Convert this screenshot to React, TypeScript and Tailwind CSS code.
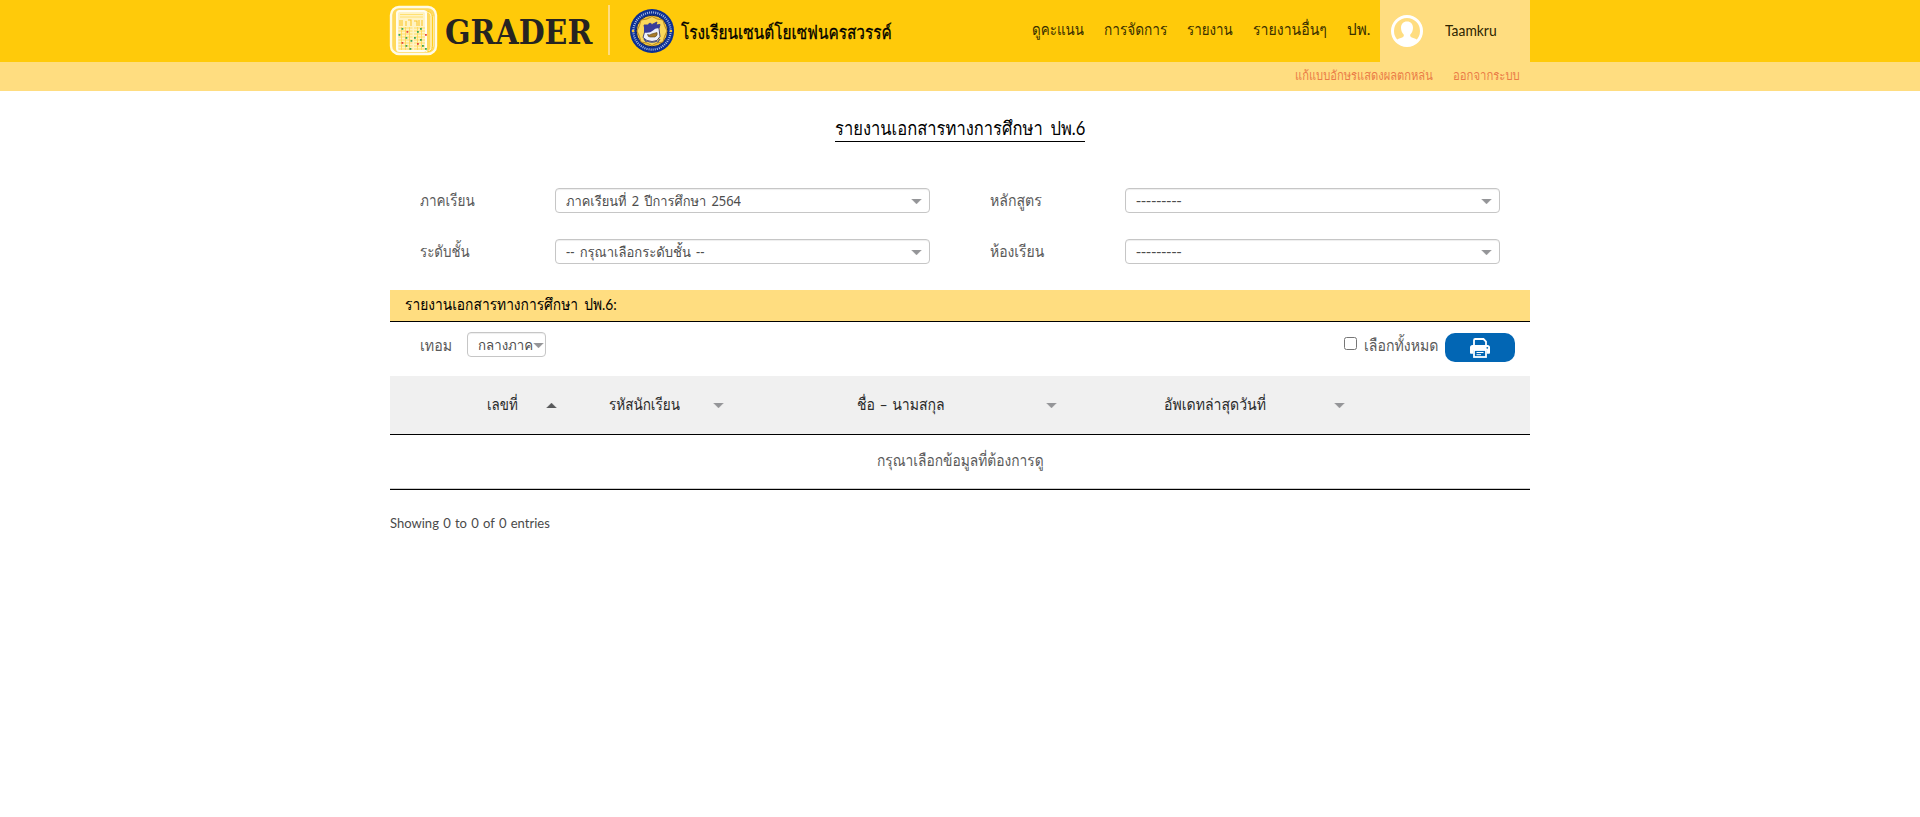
import { useLayoutEffect, useRef } from 'react';
import type { ReactNode } from 'react';

/* Condenses a line of text so that it fills the width its class gives it. */
function Fit({ className, children }: { className: string; children: ReactNode }) {
  const outer = useRef<HTMLSpanElement>(null);
  const inner = useRef<HTMLSpanElement>(null);
  useLayoutEffect(() => {
    const o = outer.current!;
    const i = inner.current!;
    i.style.transform = `scaleX(${o.clientWidth / i.offsetWidth})`;
  }, []);
  return (
    <span ref={outer} className={`block shrink-0 whitespace-nowrap ${className}`}>
      <span ref={inner} className="inline-block origin-left">{children}</span>
    </span>
  );
}

function Logo() {
  const dots = [
    [20, 31, '#3aa655'], [25, 34, '#e8453c'], [17, 37, '#3aa655'], [24, 40, '#3aa655'], [29, 43, '#3aa655'], [20, 45, '#e8453c'], [24, 48, '#3aa655'], [28, 51, '#3aa655'],
    [41, 31, '#3aa655'], [38, 34, '#3aa655'], [46, 37, '#e8453c'], [35, 40, '#3aa655'], [41, 42, '#3aa655'], [38, 46, '#e8453c'], [43, 48, '#3aa655'], [46, 51, '#3aa655'],
  ] as const;
  return (
    <svg viewBox="0 0 56 60" className="h-[60px] w-[56px] shrink-0">
      <rect x="5" y="7" width="45" height="47" rx="8" fill="#ffd95e" stroke="#fffbe6" strokeWidth="2.4" />
      <path d="M40 11.500q5 1 5 5v30q0 5-5 5M43 12q4 1 4 5v29q0 4-4 5" fill="none" stroke="#fffbe6" strokeWidth="1" />
      <path d="M41.500 11.500q5 1 5 5v30q0 5-5 5" fill="none" stroke="#ffce1e" strokeWidth="1" />
      <rect x="11" y="11" width="29" height="40" rx="2.500" fill="#fff3c4" stroke="#fffdf2" strokeWidth="2" />
      <path d="M14 14.500h23M14 17h23" stroke="#ffdb5c" strokeWidth=".8" />
      <path d="M14 20v6M16 20v6M20 21v5M22 20h3v6M28 21h3v5M33 20v6M36 20v6" stroke="#fcc62c" strokeWidth="1.100" fill="none" />
      <g transform="translate(-2.500 -3)">
        <path d="M15 31h14M15 34h14M15 37h14M15 40h14M15 43h14M15 46h14M15 49h14M15 52h14M18 30v23M22 30v23M26 30v23M30.500 31h11M30.500 34h11M30.500 37h11M30.500 40h11M30.500 43h11M30.500 46h11M30.500 49h11M30.500 52h11M34 30v23M38 30v23" stroke="#ffd750" strokeWidth=".8" />
        {dots.map(([x, y, c]) => <rect key={`${x}-${y}`} x={x > 32 ? x - 4.5 : x - 2} y={y} width="1.800" height="1.800" fill={c} />)}
      </g>
    </svg>
  );
}

function Emblem() {
  return (
    <svg viewBox="0 0 44 44" className="h-[44px] w-[44px]">
      <circle cx="22" cy="22" r="22" fill="#0b2f94" />
      <circle cx="22" cy="22" r="18.600" fill="none" stroke="#a9bde4" strokeWidth="2.200" strokeDasharray="1 1.100" pathLength="116" />
      <circle cx="22" cy="22" r="15.800" fill="#f6c534" stroke="#0c2368" strokeWidth="1" />
      <path d="M22 7.500l5 2.500 6 1 1.500 5.500 2.500 5.500-2.500 5.500-1.500 5.500-6 1-5 2.500-5-2.500-6-1-1.500-5.500L7 22l2.500-5.500L11 11l6-1z" fill="#fbd85a" stroke="#a8791d" strokeWidth=".8" />
      <circle cx="3" cy="22" r="1.300" fill="#f6c534" />
      <circle cx="41" cy="22" r="1.300" fill="#f6c534" />
      <path d="M14 16l3.500 0 2.500-2 2 1.500 5-2.500-1 3 4-.5-1 4 1 8-3 4-5 1-5-1-4-3 2-7z" fill="#eef0fa" stroke="#35356f" strokeWidth=".9" />
      <path d="M14 16l3.500 0 2.500-2 2 1.500 5-2.500-1 3 4-.5-1 4q-3-1-6 2t-9 2z" fill="#383b9a" />
      <path d="M17.500 25.500q2 1 4-.5l5.500-1.500q1 3-2 4.500h-5q-2 0-2.500-2.500z" fill="#a87a28" stroke="#57431d" strokeWidth=".6" />
      <path d="M14 30l2.500 3M30 30l-2.500 3.500M17 32q5 2.500 10 0" fill="none" stroke="#3f4c8f" strokeWidth="1.200" />
    </svg>
  );
}

function Avatar() {
  return (
    <svg viewBox="0 0 32 32" className="size-[32px] shrink-0">
      <circle cx="16" cy="16" r="14.500" fill="none" stroke="#fff" strokeWidth="3" />
      <path d="M16 6.500c3.800 0 6 2.700 6 6.300 0 2.900-1.200 5.400-2.700 6.600-.5 1.800.3 2.700 2.200 3.300 2 .6 4 1.300 5.200 2.600A15 15 0 0 1 16 30.500 15 15 0 0 1 5.300 25.300c1.200-1.300 3.200-2 5.200-2.600 1.900-.6 2.700-1.500 2.200-3.300-1.500-1.200-2.700-3.700-2.700-6.600 0-3.600 2.200-6.300 6-6.300z" fill="#fff" />
    </svg>
  );
}

function Printer() {
  return (
    <svg viewBox="0 0 22 20" className="h-[20px] w-[22px]">
      <path d="M5 8V2.200Q5 1 6.200 1h8.300L17 3.500V8" fill="none" stroke="#fff" strokeWidth="1.800" />
      <path d="M3.500 7h15Q21 7 21 9.500V15q0 .8-.8.8H18V12H4v3.800H1.800Q1 15.800 1 15V9.500Q1 7 3.500 7z" fill="#fff" />
      <rect x="5" y="12" width="12" height="7" fill="#0266b4" stroke="#fff" strokeWidth="1.800" />
      <path d="M7.500 14.500h7M7.500 16.700h4.500" stroke="#fff" strokeWidth="1" />
      <circle cx="18.300" cy="9.800" r=".9" fill="#0266b4" />
    </svg>
  );
}

function Caret({ up = false, className = '' }: { up?: boolean; className?: string }) {
  return (
    <svg viewBox="0 0 11 5" className={`h-[5px] w-[11px] shrink-0 ${className}`}>
      <path d={up ? 'M0.500 5L5.500 0l5 5z' : 'M0.500 0h10l-5 5z'} fill={up ? '#58595b' : '#949598'} stroke={up ? '#58595b' : '#949598'} strokeWidth=".3" />
    </svg>
  );
}

function Select({ className, text, width, pad = 'px-[10px]' }: { className: string; text: string; width: string; pad?: string }) {
  return (
    <div className={`flex h-[25px] items-center justify-between rounded-[4px] border border-[#c6c6c6] bg-white font-['Noto_Sans','Loma',sans-serif] text-[#4d4d4d] shadow-[inset_0_1px_1px_#eeeeee] ${pad} ${className}`}>
      <Fit className={`text-[14px] leading-[22px] [word-spacing:2px] ${width}`}>{text}</Fit>
      <Caret className="mt-[1px] -mr-[3px]" />
    </div>
  );
}

function Field({ label, labelWidth, text, width }: { label: string; labelWidth: string; text: string; width: string }) {
  return (
    <div className="flex w-[570px] pl-[30px]">
      <div className="w-[135px] text-[16px] leading-[23px] text-[#5a5a5a]">
        <Fit className={labelWidth}>{label}</Fit>
      </div>
      <Select className="w-[375px]" text={text} width={width} />
    </div>
  );
}

const nav: [string, string][] = [
  ['ดูคะแนน', 'w-[52px]'],
  ['การจัดการ', 'w-[63px]'],
  ['รายงาน', 'w-[46px]'],
  ['รายงานอื่นๆ', 'w-[74px]'],
  ['ปพ.', 'w-[23px]'],
];

export default function App() {
  return (
    <div className="min-h-[817px] bg-white font-['Lato','Loma','Noto_Sans',sans-serif] text-[16px] text-black">
      <header className="bg-[#ffca0a]">
        <div className="mx-auto flex h-[62px] w-[1140px]">
          <div className="-ml-[4px] w-[59px]"><Logo /></div>
          <div className="w-[149px] shrink-0 pt-[2px] font-['DejaVu_Serif',serif] text-[34px] leading-[60px] font-bold text-[#262421]">
            <Fit className="w-[147px]">GRADER</Fit>
          </div>
          <div className="mt-[5px] ml-[14px] h-[50px] w-[2px] bg-[#ffdd80]" />
          <div className="mt-[9px] ml-[20px]"><Emblem /></div>
          <div className="ml-[7px] pt-[17px] text-[19px] leading-[30px] [-webkit-text-stroke:0.3px_black]"><Fit className="w-[211px]">โรงเรียนเซนต์โยเซฟนครสวรรค์</Fit></div>
          <nav className="ml-auto flex gap-[20px] pr-[10px] text-[16px] leading-[58px] text-[#3a3000]">
            {nav.map(([label, w]) => <Fit key={label} className={w}>{label}</Fit>)}
          </nav>
          <div className="flex w-[150px] shrink-0 bg-[#ffdd80] pl-[11px]">
            <div className="pt-[15px]"><Avatar /></div>
            <Fit className="ml-[22px] w-[52px] leading-[60px] text-[#2e2500]">Taamkru</Fit>
          </div>
        </div>
      </header>
      <div className="bg-[#ffdd80]">
        <div className="mx-auto flex h-[29px] w-[1140px] justify-end gap-[20px] pr-[10px] text-[13px] leading-[27px] text-[#ea7c46]">
          <Fit className="w-[138px]">แก้แบบอักษรแสดงผลตกหล่น</Fit>
          <Fit className="w-[67px]">ออกจากระบบ</Fit>
        </div>
      </div>

      <main className="mx-auto w-[1140px]">
        <h1 className="mx-auto mt-[22px] h-[29px] w-[250px] border-b border-black text-[19px] leading-[29px] [word-spacing:4px]">
          <Fit className="w-[250px]">รายงานเอกสารทางการศึกษา ปพ.6</Fit>
        </h1>
        <div className="mt-[46px] grid grid-cols-2 gap-y-[26px]">
          <Field label="ภาคเรียน" labelWidth="w-[55px]" text="ภาคเรียนที่ 2 ปีการศึกษา 2564" width="w-[175px]" />
          <Field label="หลักสูตร" labelWidth="w-[52px]" text="---------" width="w-[46px]" />
          <Field label="ระดับชั้น" labelWidth="w-[50px]" text="-- กรุณาเลือกระดับชั้น --" width="w-[139px]" />
          <Field label="ห้องเรียน" labelWidth="w-[54px]" text="---------" width="w-[46px]" />
        </div>
        <h2 className="mt-[26px] h-[32px] border-b border-black bg-[#ffdd80] pl-[15px] text-[16px] leading-[27px] [word-spacing:3px]">
          <Fit className="w-[212px]">รายงานเอกสารทางการศึกษา ปพ.6:</Fit>
        </h2>
        <div className="flex h-[54px] pt-[10px] pr-[15px] pl-[30px] text-[#5a5a5a]">
          <Fit className="mr-[15px] w-[32px] leading-[25px]">เทอม</Fit>
          <Select className="w-[79px]" text="กลางภาค" width="w-[55px]" pad="pl-[10px] pr-[5px]" />
          <div className="mt-[5px] ml-auto size-[13px] rounded-[2.5px] border border-[#767676] bg-white" />
          <Fit className="ml-[7px] w-[74px] leading-[26px]">เลือกทั้งหมด</Fit>
          <button className="mt-[1px] ml-[7px] flex h-[29px] w-[70px] items-center justify-center rounded-[10px] bg-[#0266b4]"><Printer /></button>
        </div>
        <div className="flex h-[59px] items-center border-b border-black bg-[#f0f0f0] pb-[2px] pl-[97px] text-[16px] leading-[30px] text-[#2b2b2b] [word-spacing:1px]">
          <Fit className="w-[31px]">เลขที่</Fit>
          <Caret up className="mt-[3px] ml-[28px]" />
          <Fit className="ml-[52px] w-[71px]">รหัสนักเรียน</Fit>
          <Caret className="mt-[2px] ml-[33px]" />
          <Fit className="ml-[133px] w-[88px]">ชื่อ – นามสกุล</Fit>
          <Caret className="mt-[2px] ml-[101px]" />
          <Fit className="ml-[107px] w-[102px]">อัพเดทล่าสุดวันที่</Fit>
          <Caret className="mt-[2px] ml-[68px]" />
        </div>
        <div className="flex h-[55px] justify-center border-b border-black pt-[10px] text-[#5a5a5a] shadow-[inset_0_-1px_0_#cccccc]">
          <Fit className="w-[167px] leading-[30px]">กรุณาเลือกข้อมูลที่ต้องการดู</Fit>
        </div>
        <Fit className="mt-[19px] w-[160px] text-[14px] leading-[28px] text-[#4a4a4a] [word-spacing:1px]">Showing 0 to 0 of 0 entries</Fit>
      </main>
    </div>
  );
}
